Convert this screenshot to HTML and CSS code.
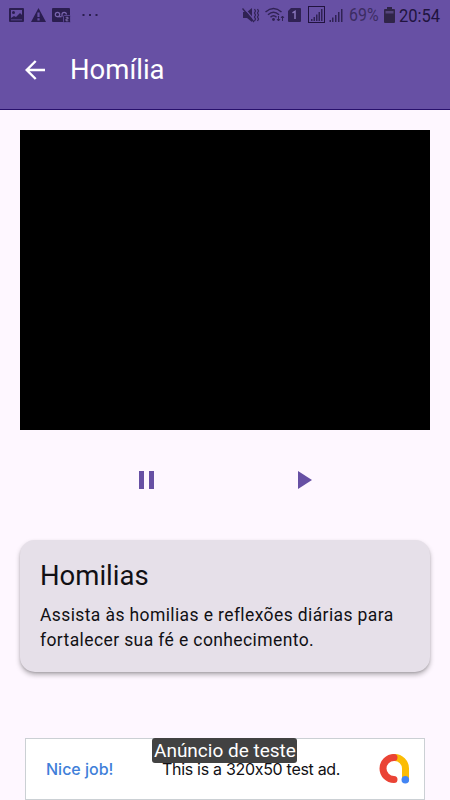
FILE: index.html
```html
<!DOCTYPE html>
<html lang="pt">
<head>
<meta charset="utf-8">
<title>Homília</title>
<link rel="stylesheet" href="styles.css">
</head>
<body>
<header class="top">
  <div class="status">
    <svg class="status-left" width="104" height="30" viewBox="0 0 104 30">
      <g fill="#2b1e50">
        <path fill-rule="evenodd" d="M10 8h13q1 0 1 1v12q0 1-1 1H10q-1 0-1-1V9q0-1 1-1zM11 10v8l3-2 2 1 4-4 2 2v-5zM11 19.500v.8h11v-.8z"/>
        <circle cx="13.500" cy="12.500" r="1.500"/>
        <path fill-rule="evenodd" d="M38.500 8L46 22H31zM37.400 12.500h2.200v4.500h-2.200zM37.400 18.300h2.200v2.200h-2.200z"/>
        <path d="M53 8h16q1 0 1 1v12q0 1-1 1H53q-1 0-1-1V9q0-1 1-1z"/>
        <rect x="82.500" y="14" width="2" height="2"/><rect x="89" y="14" width="2" height="2"/><rect x="95.500" y="14" width="2" height="2"/>
      </g>
      <g fill="none" stroke="#7965ae" stroke-width="1.200">
        <circle cx="57.500" cy="14.500" r="2.200"/><path d="M57.500 16.700h4"/><path d="M62 16.700v-2.200a2.200 2.200 0 0 1 4.400 0"/>
      </g>
      <rect x="63.500" y="15.500" width="7" height="7" rx="1" fill="#2b1e50" stroke="#6750a4" stroke-width=".8"/>
      <path d="M65.700 17.300h2.300v1.700h-2v1.800h2.300" fill="none" stroke="#8d7bbb" stroke-width=".8"/>
    </svg>
    <div class="status-right">
      <svg width="110" height="30" viewBox="238 0 110 30">
        <g fill="#302254">
          <path d="M243 12h4l5-4v14l-5-4h-4z"/>
          <path d="M243.500 7.500l12 14" stroke="#6750a4" stroke-width="1.200"/>
          <path d="M242.500 8.500l11.500 13.500" stroke="#302254" stroke-width="1.300"/>
          <path d="M254.500 9l1 2-1 2 1 2-1 2 1 2-1 2M257.500 9l1 2-1 2 1 2-1 2 1 2-1 2" fill="none" stroke="#302254" stroke-width="1.200"/>
          <path d="M265.500 12q8-7 16 0M268 14.800q5.500-5 11 0M270.500 17.300q3-3 6 0" fill="none" stroke="#302254" stroke-width="1.500"/>
          <circle cx="273.500" cy="19.500" r="1.400"/>
          <path d="M278.500 16v5m-1.500-2l1.500 2 1.500-2M282.500 21v-5m-1.500 2l1.500-2 1.500 2" fill="none" stroke="#302254"/>
          <path d="M291 8h9q1 0 1 1v12q0 1-1 1h-11q-1 0-1-1V11z"/>
          <path d="M292.500 12.800l2.500-1.500V19" fill="none" stroke="#8875bb" stroke-width="1.500"/>
          <rect x="308.500" y="6.500" width="16" height="16" fill="none" stroke="#21133f"/>
          <path d="M311 19h1.500v2H311zM313.500 17h1.500v4h-1.500zM316 14.500h1.500V21H316zM318.500 12h1.500v9h-1.500zM321 9h1.500v12H321z"/>
          <path d="M329.500 20h1.500v2h-1.500zM332 17.500h1.500V22H332zM335 15h1.500v7H335zM338 12h1.500v10H338zM341 9h1.500v13H341z"/>
        </g>
      </svg>
      <span class="percent">69%</span>
      <svg class="battery" width="11" height="16" viewBox="0 0 11 16"><path d="M3 0h5v2h2q1 0 1 1v12q0 1-1 1H1q-1 0-1-1V3q0-1 1-1h2z" fill="#302548"/><path d="M1.500 4h8v2.500h-8z" fill="#55457c"/></svg>
      <span class="clock">20:54</span>
    </div>
  </div>
  <div class="appbar">
    <svg class="back" width="20" height="20" viewBox="0 0 20 20" fill="none" stroke="#fff" stroke-width="2.400"><path d="M20 10H1.800M10.700 1L1.700 10l9 9"/></svg>
    <h1>Homília</h1>
  </div>
</header>
<main>
  <div class="video"></div>
  <div class="controls">
    <svg width="15" height="18" viewBox="0 0 15 18" fill="#6750a4"><path d="M0 0h5v18H0zM10 0h5v18h-5z"/></svg>
    <svg width="14" height="18" viewBox="0 0 14 18" fill="#6750a4"><path d="M0 0l14 9-14 9z"/></svg>
  </div>
  <section class="card">
    <h2>Homilias</h2>
    <p>Assista às homilias e reflexões diárias para<br>fortalecer sua fé e conhecimento.</p>
  </section>
</main>
<aside class="ad">
  <span class="nice">Nice job!</span>
  <span class="message">This is a 320x50 test ad.</span>
  <svg class="logo" width="32" height="32" viewBox="0 0 32 32" fill="none" stroke-width="7" stroke-linecap="round">
    <path d="M16 4.500A11 11 0 0 1 27.500 16v10" stroke="#fbbc04"/>
    <path d="M16 4.500a11 11 0 1 0 0 22" stroke="#ea4335"/>
    <circle cx="27.300" cy="26.700" r="3.800" fill="#4285f4"/>
  </svg>
  <span class="label">Anúncio de teste</span>
</aside>
</body>
</html>
```
FILE: styles.css
```css
* { box-sizing: border-box; }
body { margin: 0; width: 450px; height: 800px; overflow: hidden; background: #fef7ff; font-family: Roboto, sans-serif; color: #111014; display: flex; flex-direction: column; }
svg { display: block; flex: none; }
h1, h2, p { margin: 0; font-weight: 400; }
.top { height: 110px; flex: none; background: #6750a4; border-bottom: 1px solid #28106b; }
.status { height: 30px; display: flex; justify-content: space-between; }
.status-right { display: flex; width: 212px; white-space: nowrap; }
.percent { width: 32px; margin-left: 1px; font-size: 18.5px; line-height: 31px; color: #3c2c62; transform: scaleX(.86); transform-origin: left; }
.battery { margin: 7px 0 0 3px; }
.clock { margin-left: 4px; font-size: 19px; line-height: 31px; color: #21143f; transform: scaleX(.87); transform-origin: left; }
.appbar { height: 80px; display: flex; align-items: center; padding-left: 25px; }
h1 { margin-left: 25px; font-size: 27.5px; line-height: 36px; color: #fff; }
main { padding: 20px 20px 0; }
.video { height: 300px; background: #000; }
.controls { height: 110px; display: flex; padding: 41px 0 0 119px; gap: 144px; }
.card { height: 132px; padding: 18px 20px; border-radius: 15px; background: #e6e0e9; box-shadow: 0 3px 5px rgba(0,0,0,.28), 0 1px 2px rgba(0,0,0,.12); white-space: nowrap; }
h2 { font-size: 27.5px; line-height: 36px; }
p { margin-top: 9px; font-size: 17.5px; line-height: 25px; letter-spacing: .39px; }
.ad { position: relative; width: 400px; height: 62px; margin: 66px 0 0 25px; flex: none; padding-left: 20px; display: flex; align-items: center; border: 1px solid #cbd0d4; background: #fff; font-family: Inter, sans-serif; white-space: nowrap; }
.nice { width: 116px; font-size: 16px; font-weight: 500; color: #3f7fd9; }
.message { width: 216px; font-size: 16px; letter-spacing: -.3px; }
.label { position: absolute; left: 126px; top: -1px; height: 25px; width: 145px; padding-left: 2px; border-radius: 3px; background: #424242; color: #fff; font: 19px/26px Roboto, sans-serif; }
```
